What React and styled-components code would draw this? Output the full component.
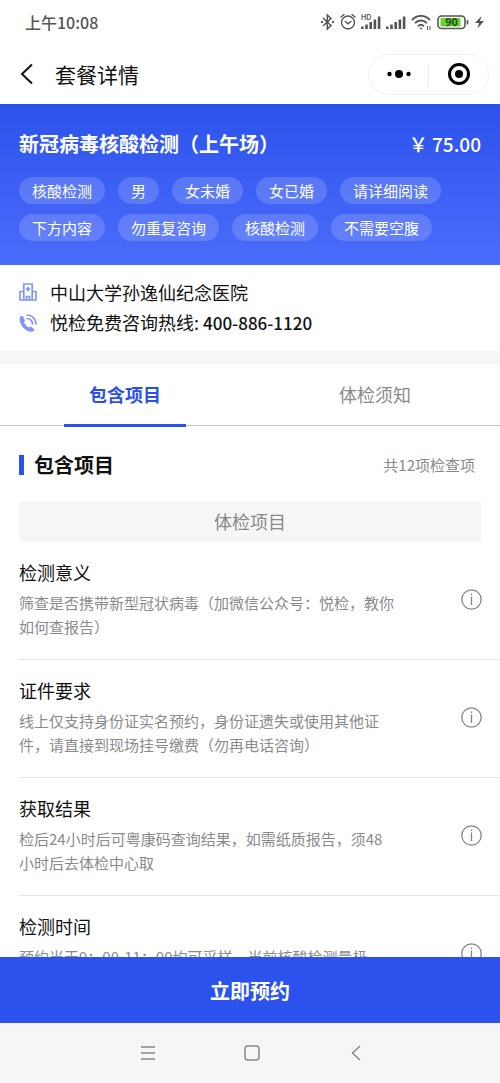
import React, { useState } from "react";
import styled, { createGlobalStyle } from "styled-components";

const GlobalStyle = createGlobalStyle`
  * { box-sizing: border-box; }
  body {
    margin: 0;
    background: #fff;
    color: #111;
    font-family: "Noto Sans CJK SC", "Noto Sans", sans-serif;
  }
  button {
    font: inherit;
    color: inherit;
    border: 0;
    padding: 0;
    background: none;
    cursor: pointer;
  }
  h1, h2, h3, p, ul { margin: 0; padding: 0; font-weight: 400; }
  ul { list-style: none; }
  svg { display: block; flex: none; }
`;

const Screen = styled.div`
  display: flex;
  flex-direction: column;
  height: 100vh;
`;

const StatusBar = styled.div`
  display: flex;
  flex: none;
  align-items: center;
  justify-content: space-between;
  height: 44px;
  padding: 0 16px 0 25px;
  color: #555;
`;

const Clock = styled.time`
  font-size: 16px;
  font-weight: 500;
`;

const StatusIcons = styled.div`
  display: flex;
  align-items: center;
  gap: 5px;
`;

const NavBar = styled.header`
  display: flex;
  flex: none;
  align-items: center;
  height: 60px;
  padding: 0 11px 0 16px;
`;

const BackButton = styled.button`
  display: flex;
  padding: 0 4px;
`;

const PageTitle = styled.h1`
  flex: 1;
  margin-left: 17px;
  font-size: 21px;
  line-height: 30px;
`;

const Capsule = styled.div`
  display: flex;
  width: 121px;
  height: 41px;
  border: 1px solid #f0f0f0;
  border-radius: 21px;
`;

const CapsuleButton = styled.button`
  display: flex;
  flex: 1;
  align-items: center;
  justify-content: center;
`;

const CapsuleDivider = styled.span`
  width: 1px;
  margin: 9px 0;
  background: #ececec;
`;

const Scroller = styled.main`
  flex: 1;
  min-height: 0;
  overflow-y: auto;
  scrollbar-width: none;
`;

const Hero = styled.section`
  padding: 24px 19px;
  color: #fff;
  background: linear-gradient(#2c52ec, #4b6dfb);
`;

const HeroHead = styled.div`
  display: flex;
  align-items: center;
  justify-content: space-between;
  margin-bottom: 17px;
  line-height: 32px;
  white-space: nowrap;
`;

const PackageName = styled.h2`
  font-size: 20px;
  font-weight: 700;
`;

const Price = styled.span`
  font-size: 19px;
  font-weight: 500;
`;

const Tags = styled.ul`
  display: flex;
  flex-wrap: wrap;
  gap: 10px 13px;
`;

const Tag = styled.li`
  padding: 0 13px;
  border-radius: 14px;
  background: rgba(255, 255, 255, 0.16);
  font-size: 15px;
  line-height: 27px;
`;

const Contact = styled.section`
  padding: 12px 19px 13px;
  border-bottom: 13px solid #f6f6f6;
`;

const ContactRow = styled.p`
  display: flex;
  align-items: center;
  gap: 13px;
  font-size: 18px;
  line-height: 30px;
`;

const PhoneLink = styled.a`
  color: inherit;
  font-size: 17px;
  font-weight: 500;
  text-decoration: none;
`;

const Tabs = styled.div`
  display: flex;
  border-bottom: 1px solid #c4c4c4;
`;

const Tab = styled.button`
  display: flex;
  flex: 1;
  justify-content: center;
  margin-bottom: -2px;
  color: ${(p) => (p.$active ? "#2b50e8" : "#8a8a8a")};
  font-size: 18px;
  font-weight: ${(p) => (p.$active ? 700 : 400)};
  line-height: 60px;
`;

const TabLabel = styled.span`
  width: 122px;
  border-bottom: 3px solid ${(p) => (p.$active ? "#2b50e8" : "transparent")};
`;

const SectionHead = styled.div`
  display: flex;
  align-items: center;
  padding: 25px 25px 22px 19px;
  line-height: 28px;
`;

const Marker = styled.span`
  width: 5px;
  height: 20px;
  margin-right: 10px;
  background: #2b50ec;
`;

const SectionTitle = styled.h2`
  flex: 1;
  font-size: 20px;
  font-weight: 700;
`;

const Count = styled.span`
  color: #888;
  font-size: 15px;
`;

const GroupTitle = styled.h3`
  margin: 0 19px;
  background: #f6f6f6;
  color: #888;
  font-size: 18px;
  line-height: 41px;
  text-align: center;
`;

const Item = styled.li`
  display: flex;
  align-items: center;
  justify-content: space-between;
  margin-left: 19px;
  padding: 18px 18px 20px 0;
  border-bottom: 1px solid #e6e6e6;
`;

const ItemBody = styled.div`
  max-width: 376px;
`;

const ItemTitle = styled.h3`
  margin-bottom: 7px;
  font-size: 18px;
  line-height: 24px;
`;

const ItemText = styled.p`
  min-height: 48px;
  color: #8a8a8a;
  font-size: 15px;
  line-height: 24px;
`;

const BookButton = styled.button`
  flex: none;
  height: 66px;
  background: #2b52ec;
  color: #fff;
  font-size: 20px;
  font-weight: 700;
`;

const SystemNav = styled.nav`
  display: flex;
  flex: none;
  align-items: center;
  justify-content: center;
  gap: 84px;
  height: 60px;
  padding-left: 4px;
  background: #f6f6f6;
`;

const SystemButton = styled.button`
  display: flex;
  justify-content: center;
  width: 20px;
`;

const Bluetooth = () => (
  <svg width="15" height="18" viewBox="0 0 15 18" fill="none" stroke="#555" strokeWidth="1.500">
    <path d="M3 5l8 7.500L7.300 16V2L11 5.500 3 13" />
    <path d="M1 9h2M12 9h2" strokeWidth="2" />
  </svg>
);

const Alarm = () => (
  <svg width="16" height="18" viewBox="0 0 16 18" fill="none" stroke="#555" strokeWidth="1.400" strokeLinecap="round">
    <circle cx="8" cy="9.500" r="6.500" />
    <path d="M1 4l3-2.500M15 4l-3-2.500M5.300 8.500L8 10.800l3-2.300" />
  </svg>
);

const Signal = ({ hd }) => (
  <svg width="20" height="18" viewBox="0 0 20 18" fill="#555">
    <path d="M0 13.500h2.600v2.500H0zM4.200 11.500h2.600V16H4.200zM8.400 9h2.600v7H8.400zM12.600 6.500h2.600V16h-2.600zM16.800 3.500h2.600V16h-2.600z" />
    {hd && (
      <text x="0" y="7" fontFamily="Inter, sans-serif" fontSize="7" fontWeight="600">HD</text>
    )}
  </svg>
);

const Wifi = () => (
  <svg width="21" height="18" viewBox="0 0 21 18" fill="none" stroke="#555" strokeWidth="1.900">
    <path d="M1 7C6 1.500 14 1.500 19 7M4 10.200c3.500-3.700 8.500-3.700 12 0M7 13.200c2-1.900 4-1.900 6 0" />
    <path d="M8.300 14.800h3.400L10 16.800z" fill="#555" stroke="none" />
    <path d="M16.500 13v4M19 13v4" strokeWidth="1" />
  </svg>
);

const Battery = () => (
  <svg width="33" height="18" viewBox="0 0 33 18">
    <rect x="1" y="3" width="27" height="12.500" rx="3.500" fill="#fff" stroke="#555" strokeWidth="1.600" />
    <rect x="3.500" y="5" width="20" height="8.500" rx="1" fill="#66d52b" />
    <path d="M30.500 7v4.500" stroke="#555" strokeWidth="1.600" />
    <text x="14.500" y="13.200" textAnchor="middle" fill="#2f4a22" fontFamily="Open Sans, sans-serif" fontSize="11" fontWeight="700">90</text>
  </svg>
);

const Bolt = () => (
  <svg width="9" height="18" viewBox="0 0 9 18" fill="#555">
    <path d="M6.500 3L0 10h4l-1.500 5.500L9 8H5z" />
  </svg>
);

const Hospital = () => (
  <svg width="18" height="18" viewBox="0 0 18 18" fill="none" stroke="#8196f3" strokeWidth="1.700">
    <path d="M4.800 17V1h8.400v16M4.800 8.500H1V17h16V8.500h-3.800M7.500 17v-3.500h3V17M9 4v4.500M6.800 6.200h4.400" />
  </svg>
);

const Phone = () => (
  <svg width="18" height="18" viewBox="0 0 18 18" fill="none" stroke="#8196f3" strokeWidth="1.700" strokeLinecap="round">
    <path d="M.8 3.500C-.6 10 7 19 14 17.500c1.200-.5 1.800-1.700 1.200-2.300l-3.200-2.500c-.6-.4-1 0-1.800.8C8 13 5.200 10.200 5 8c.9-.8 1.200-1.200.9-1.900L4 2.400c-.7-1.200-2.700-.2-3.200 1.100z" fill="#8196f3" stroke="none" />
    <path d="M8 1c5 0 9 4 9 9M8 4.500c3 0 5.500 2.500 5.500 5.500" />
  </svg>
);

const Info = () => (
  <svg width="21" height="21" viewBox="0 0 21 21" fill="none" stroke="#858585" strokeWidth="1.300">
    <circle cx="10.500" cy="10.500" r="9.700" />
    <path d="M10.500 7.500v8.500M10.500 4.500v1.600" />
  </svg>
);

const tags = ["核酸检测", "男", "女未婚", "女已婚", "请详细阅读", "下方内容", "勿重复咨询", "核酸检测", "不需要空腹"];

const tabs = ["包含项目", "体检须知"];

const items = [
  ["检测意义", "筛查是否携带新型冠状病毒（加微信公众号：悦检，教你如何查报告）"],
  ["证件要求", "线上仅支持身份证实名预约，身份证遗失或使用其他证件，请直接到现场挂号缴费（勿再电话咨询）"],
  ["获取结果", "检后24小时后可粤康码查询结果，如需纸质报告，须48小时后去体检中心取"],
  ["检测时间", "预约当天9：00-11：00均可采样，当前核酸检测量极"],
];

export default function App() {
  const [active, setActive] = useState(0);
  return (
    <Screen>
      <GlobalStyle />
      <StatusBar>
        <Clock>上午10:08</Clock>
        <StatusIcons>
          <Bluetooth />
          <Alarm />
          <Signal hd />
          <Signal />
          <Wifi />
          <Battery />
          <Bolt />
        </StatusIcons>
      </StatusBar>
      <NavBar>
        <BackButton aria-label="返回">
          <svg width="14" height="22" viewBox="0 0 14 22" fill="none" stroke="#111" strokeWidth="2">
            <path d="M12 1.500L2 11l10 9.500" />
          </svg>
        </BackButton>
        <PageTitle>套餐详情</PageTitle>
        <Capsule>
          <CapsuleButton aria-label="更多">
            <svg width="24" height="10" viewBox="0 0 24 10">
              <circle cx="2.500" cy="5" r="2.200" />
              <circle cx="12" cy="5" r="4" />
              <circle cx="21.500" cy="5" r="2.200" />
            </svg>
          </CapsuleButton>
          <CapsuleDivider />
          <CapsuleButton aria-label="关闭">
            <svg width="22" height="22" viewBox="0 0 22 22">
              <circle cx="11" cy="11" r="9.500" fill="none" stroke="#000" strokeWidth="3" />
              <circle cx="11" cy="11" r="4" />
            </svg>
          </CapsuleButton>
        </Capsule>
      </NavBar>
      <Scroller>
        <Hero>
          <HeroHead>
            <PackageName>新冠病毒核酸检测（上午场）</PackageName>
            <Price>￥ 75.00</Price>
          </HeroHead>
          <Tags>
            {tags.map((t, i) => (
              <Tag key={i}>{t}</Tag>
            ))}
          </Tags>
        </Hero>
        <Contact>
          <ContactRow>
            <Hospital />
            中山大学孙逸仙纪念医院
          </ContactRow>
          <ContactRow>
            <Phone />
            <span>
              悦检免费咨询热线: <PhoneLink href="tel:400-886-1120">400-886-1120</PhoneLink>
            </span>
          </ContactRow>
        </Contact>
        <Tabs role="tablist">
          {tabs.map((t, i) => (
            <Tab key={t} role="tab" aria-selected={i === active} $active={i === active} onClick={() => setActive(i)}>
              <TabLabel $active={i === active}>{t}</TabLabel>
            </Tab>
          ))}
        </Tabs>
        <SectionHead>
          <Marker />
          <SectionTitle>包含项目</SectionTitle>
          <Count>共12项检查项</Count>
        </SectionHead>
        <GroupTitle>体检项目</GroupTitle>
        <ul>
          {items.map(([title, text]) => (
            <Item key={title}>
              <ItemBody>
                <ItemTitle>{title}</ItemTitle>
                <ItemText>{text}</ItemText>
              </ItemBody>
              <button aria-label={title + "说明"}>
                <Info />
              </button>
            </Item>
          ))}
        </ul>
      </Scroller>
      <BookButton>立即预约</BookButton>
      <SystemNav>
        <SystemButton aria-label="菜单">
          <svg width="16" height="16" viewBox="0 0 16 16" stroke="#888" strokeWidth="1.300">
            <path d="M1 2h14M1 8h14M1 14h14" />
          </svg>
        </SystemButton>
        <SystemButton aria-label="主页">
          <svg width="16" height="16" viewBox="0 0 16 16" fill="none" stroke="#888" strokeWidth="1.500">
            <rect x="1" y="1" width="14" height="14" rx="3" />
          </svg>
        </SystemButton>
        <SystemButton aria-label="后退">
          <svg width="10" height="16" viewBox="0 0 10 16" fill="none" stroke="#888" strokeWidth="1.500">
            <path d="M9 1L1.500 8 9 15" />
          </svg>
        </SystemButton>
      </SystemNav>
    </Screen>
  );
}
